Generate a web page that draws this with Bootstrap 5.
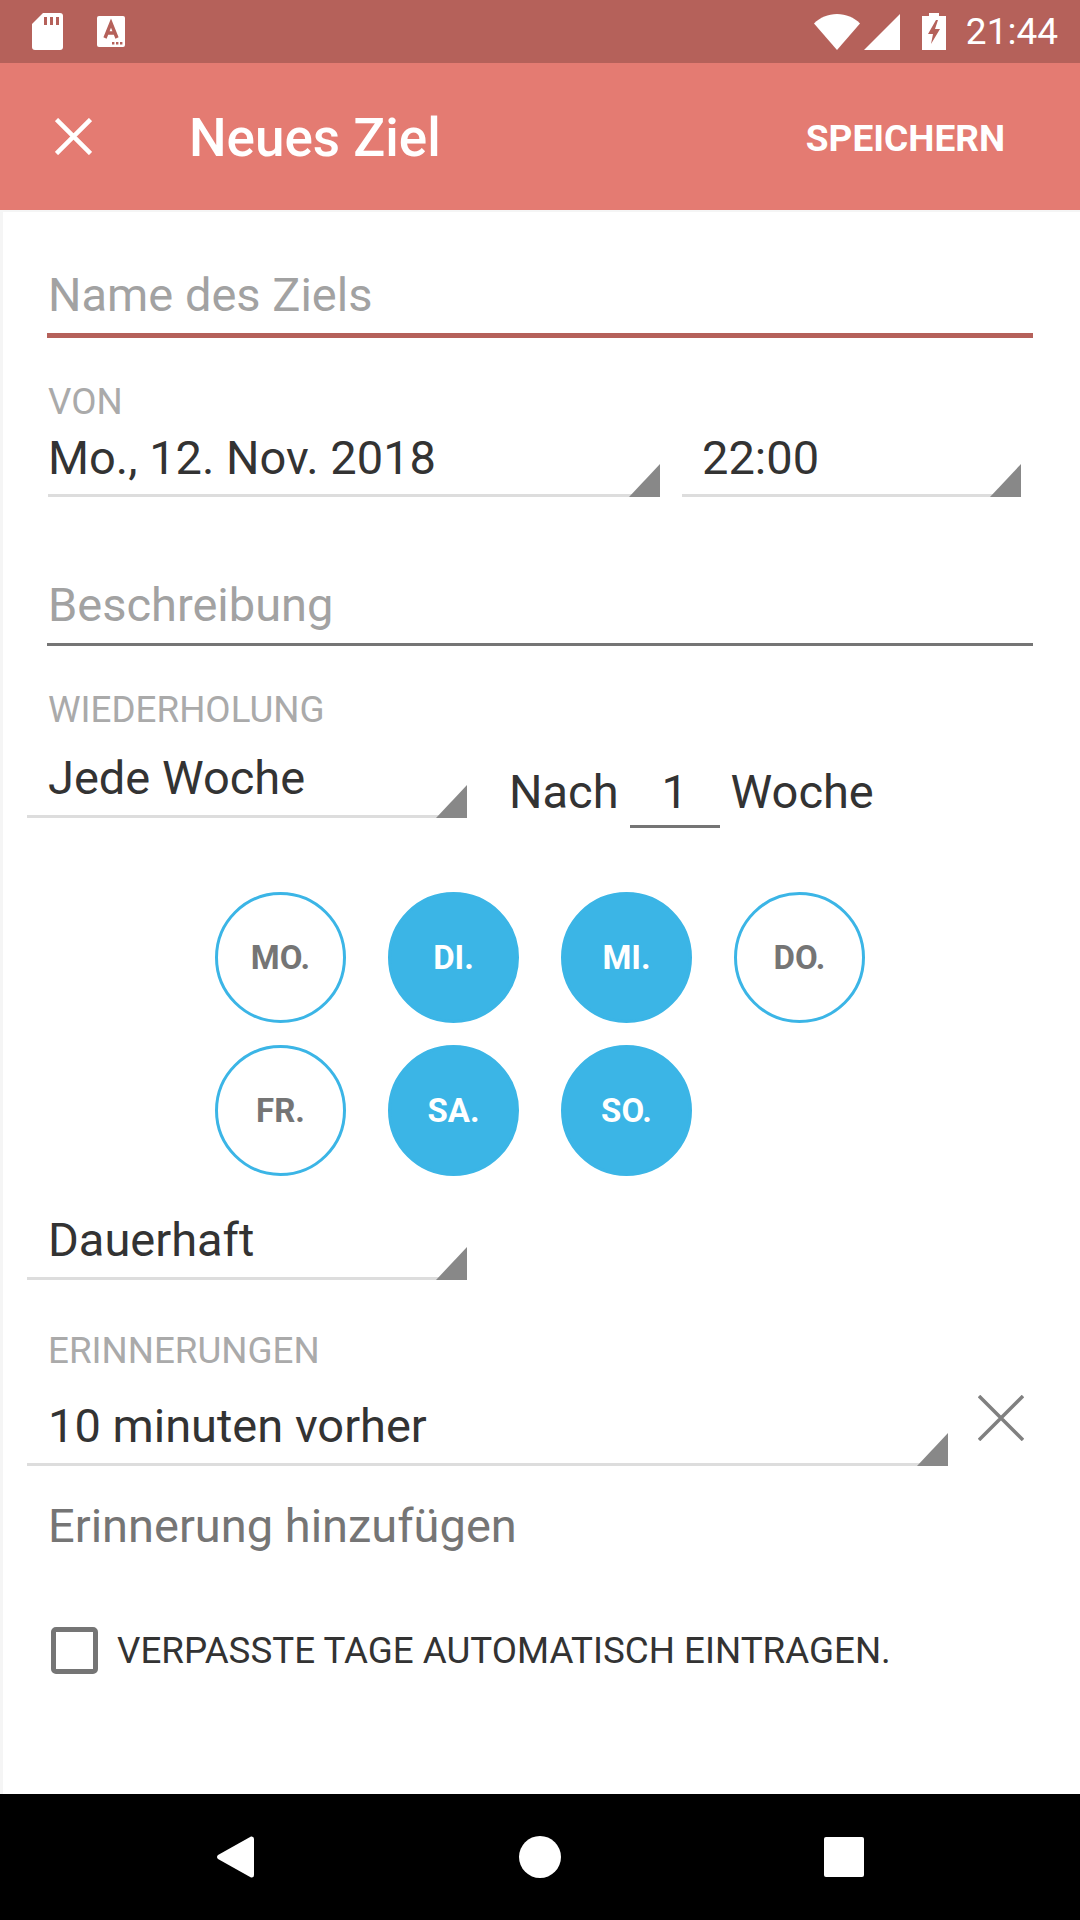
<!DOCTYPE html>
<html lang="de">
<head>
  <meta charset="UTF-8" />
  <meta name="viewport" content="width=device-width, initial-scale=1.0" />
  <title>Neues Ziel</title>
  <link href="https://cdn.jsdelivr.net/npm/bootstrap@5.3.0/dist/css/bootstrap.min.css" rel="stylesheet" />
  <style>
    html, body { height: 100%; }
    body {
      margin: 0;
      background: #f5f5f5;
      color: #333;
      font-family: Roboto, "Liberation Sans", sans-serif;
      width: 1080px;
      height: 1920px;
      overflow: hidden;
    }
    .status-strip { height: 63px; background: #b5615a; color: #fff; padding: 0 22px 0 32px; }
    .status-time { font-size: 37px; line-height: 1; margin-left: 20px; }
    .app-strip { height: 147px; background: #e47b72; color: #fff; padding: 0 75px 0 55px; }
    .app-title { font-size: 53px; font-weight: 500; margin: 4px 0 0 97px; line-height: 1; }
    .app-save { font-size: 37px; font-weight: 700; line-height: 1; margin-top: 4px; }
    .form-pane { height: 1582px; margin: 2px 0 0 3px; padding-top: 55px; background: #fff; }
    .goal-input { margin: 0 47px 0 44px; font-size: 47px; color: #a2a2a2; padding-left: 1px; }
    .goal-name { line-height: 55px; padding-bottom: 11px; border-bottom: 5px solid #b5615a; }
    .goal-text { line-height: 57px; margin-top: 79px; padding-bottom: 10px; border-bottom: 3px solid #757575; }
    .section-label { font-size: 36.75px; line-height: 40px; color: #aaa; margin-left: 45px; }
    .spin {
      position: relative;
      font-size: 47px;
      line-height: 59px;
      height: 70px;
      border-bottom: 3px solid #ddd;
    }
    .spin::after {
      content: "";
      position: absolute;
      right: 0;
      bottom: -3px;
      width: 31px;
      height: 33px;
      background: #888;
      clip-path: polygon(100% 0, 100% 100%, 0 100%);
    }
    .spin-short { height: 69px; }
    .spin-wide { padding-left: 21px; }
    .every-word { font-size: 47px; line-height: 59px; }
    .every-num { width: 90px; text-align: center; font-size: 47px; line-height: 59px; height: 66px; border-bottom: 3px solid #757575; margin: 0 11px; }
    .day-grid { display: grid; grid-template-columns: repeat(4, 131px); gap: 22px 42px; margin: 64px 0 0 212px; }
    .day-dot {
      width: 131px;
      height: 131px;
      border-radius: 50%;
      border: 3px solid #3bb5e6;
      color: #757575;
      font-size: 33px;
      font-weight: 700;
    }
    .day-dot.is-on { background: #3bb5e6; color: #fff; }
    .add-link { font-size: 47px; line-height: 59px; color: #757575; margin: 30px 0 0 45px; }
    .auto-row { margin: 72px 0 0 48px; }
    .auto-row .form-check-input {
      width: 47px;
      height: 47px;
      margin: 0 19px 0 0;
      float: none;
      border: 5px solid #757575;
      border-radius: 5px;
      flex: none;
    }
    .auto-row label { font-size: 36.75px; line-height: 47px; color: #333; }
    .soft-strip { height: 126px; background: #000; }
  </style>
</head>
<body>
  <div class="status-strip d-flex align-items-center">
    <svg width="31" height="37" viewBox="0 0 31 37"><path fill="#fff" d="M11 0H28a3 3 0 0 1 3 3V34a3 3 0 0 1-3 3H3a3 3 0 0 1-3-3V11Z"/><path fill="#b5615a" d="M12 4h3v8h-3zM18 4h3v8h-3zM24 4h3v8h-3z"/></svg>
    <svg width="28" height="31" viewBox="0 0 28 31" style="margin-left:34px"><rect width="28" height="31" rx="2" fill="#fff"/><path fill="none" stroke="#b5615a" stroke-width="3.4" d="M8 22 14 7l6 15M10 17h8"/><path fill="#b5615a" d="M15 26h2.4v2.4H15zM19 26h2.4v2.4H19zM23 26h2.4v2.4H23z"/></svg>
    <svg width="46" height="36" viewBox="0 0 46 36" class="ms-auto"><path fill="#fff" d="M0 9.500C6 3.500 14 0 23 0s17 3.500 23 9.500L23 36Z"/></svg>
    <svg width="36" height="36" viewBox="0 0 36 36" class="ms-1"><path fill="#fff" d="M36 0V36H0Z"/></svg>
    <svg width="24" height="37" viewBox="0 0 24 37" style="margin-left:22px"><path fill="#fff" d="M7 0h10v3h7v34H0V3h7Z"/><path fill="#b5615a" d="M14 7 6 21h5l-2 10 9-15h-5l3-9Z"/></svg>
    <span class="status-time">21:44</span>
  </div>

  <nav class="app-strip d-flex align-items-center">
    <svg width="37" height="37" viewBox="0 0 37 37"><path stroke="#fff" stroke-width="4.500" d="M1.500 1.500 35.500 35.500M35.500 1.500 1.500 35.500"/></svg>
    <h1 class="app-title">Neues Ziel</h1>
    <span class="app-save ms-auto">SPEICHERN</span>
  </nav>

  <main class="form-pane">
    <div class="goal-input goal-name">Name des Ziels</div>

    <div class="section-label" style="margin-top:44px;margin-bottom:6px">VON</div>
    <div class="d-flex" style="margin-left:45px">
      <div class="spin spin-short" style="width:612px">Mo., 12. Nov. 2018</div>
      <div class="spin spin-short" style="width:339px;margin-left:22px;padding-left:20px">22:00</div>
    </div>

    <div class="goal-input goal-text">Beschreibung</div>

    <div class="section-label" style="margin-top:44px;margin-bottom:18px">WIEDERHOLUNG</div>
    <div class="d-flex" style="margin-left:24px">
      <div class="spin spin-wide" style="width:440px">Jede Woche</div>
      <div class="d-flex" style="margin:14px 0 0 42px">
        <span class="every-word">Nach</span>
        <span class="every-num">1</span>
        <span class="every-word">Woche</span>
      </div>
    </div>

    <div class="day-grid">
      <div class="day-dot d-flex align-items-center justify-content-center">MO.</div>
      <div class="day-dot is-on d-flex align-items-center justify-content-center">DI.</div>
      <div class="day-dot is-on d-flex align-items-center justify-content-center">MI.</div>
      <div class="day-dot d-flex align-items-center justify-content-center">DO.</div>
      <div class="day-dot d-flex align-items-center justify-content-center">FR.</div>
      <div class="day-dot is-on d-flex align-items-center justify-content-center">SA.</div>
      <div class="day-dot is-on d-flex align-items-center justify-content-center">SO.</div>
    </div>

    <div class="spin spin-wide" style="width:440px;margin:34px 0 0 24px">Dauerhaft</div>

    <div class="section-label" style="margin-top:51px;margin-bottom:25px">ERINNERUNGEN</div>
    <div class="d-flex" style="margin-left:24px">
      <div class="spin spin-wide" style="width:921px">10 minuten vorher</div>
      <svg width="46" height="46" viewBox="0 0 46 46" style="margin:-1px 0 0 30px"><path stroke="#808080" stroke-width="3.500" d="M1 1 45 45M45 1 1 45"/></svg>
    </div>

    <div class="add-link">Erinnerung hinzufügen</div>

    <div class="auto-row form-check d-flex align-items-center p-0">
      <input class="form-check-input" type="checkbox" id="autoFill" />
      <label class="form-check-label" for="autoFill">VERPASSTE TAGE AUTOMATISCH EINTRAGEN.</label>
    </div>
  </main>

  <div class="soft-strip d-flex align-items-center">
    <svg width="37" height="42" viewBox="0 0 37 42" style="margin-left:217px"><path fill="#fff" d="M34 0.500Q37 0 37 3V39Q37 42 34 41.500L1 23Q-1 21 1 19Z"/></svg>
    <svg width="42" height="42" viewBox="0 0 42 42" style="margin-left:265px"><circle cx="21" cy="21" r="21" fill="#fff"/></svg>
    <svg width="40" height="40" viewBox="0 0 40 40" style="margin-left:263px"><rect width="40" height="40" rx="2" fill="#fff"/></svg>
  </div>

  <script src="https://cdn.jsdelivr.net/npm/bootstrap@5.3.0/dist/js/bootstrap.bundle.min.js"></script>
</body>
</html>
